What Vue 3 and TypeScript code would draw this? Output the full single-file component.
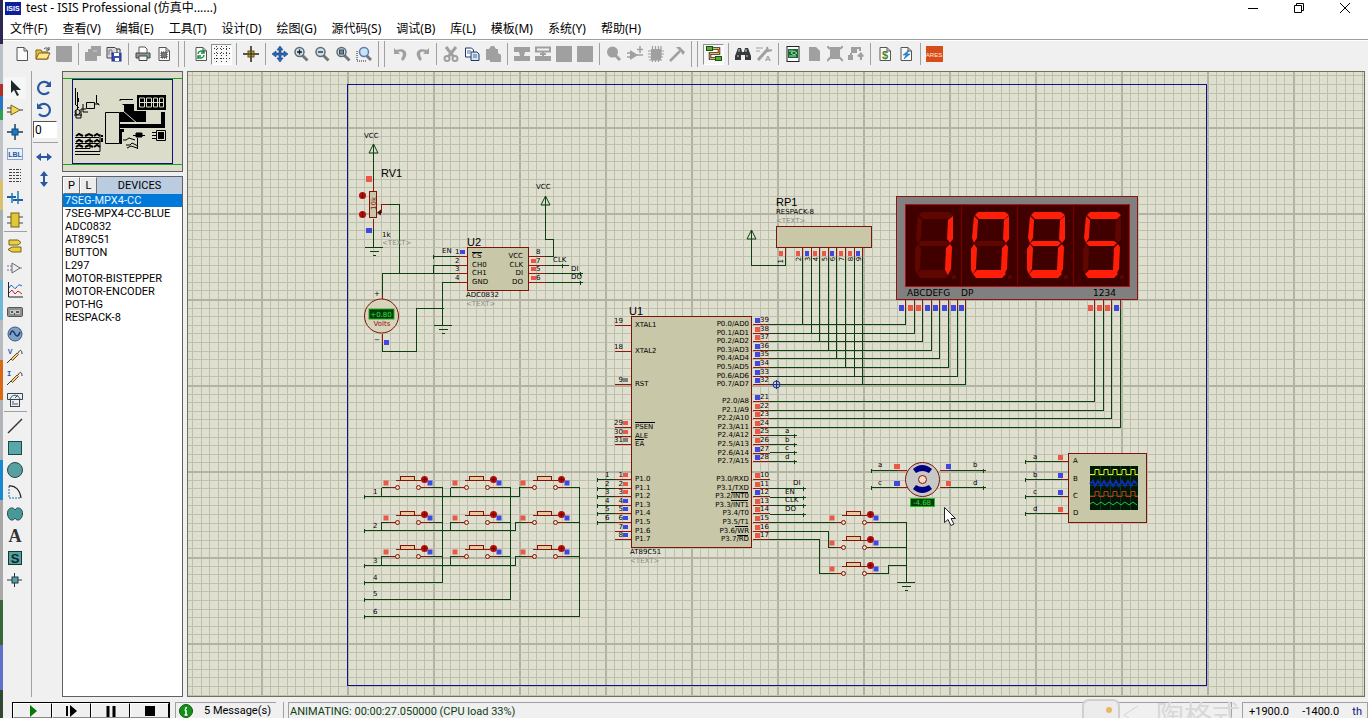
<script setup lang="ts">
interface Tool {
  name: string
  art: string
  on?: boolean
}

const menus = ['文件(F)', '查看(V)', '编辑(E)', '工具(T)', '设计(D)', '绘图(G)', '源代码(S)', '调试(B)', '库(L)', '模板(M)', '系统(Y)', '帮助(H)']

const glyph = (t: string, x: number, y: number, size: number, fill: string, family = 'Liberation Sans, sans-serif') =>
  `<text x="${x}" y="${y}" text-anchor="middle" font-family="${family}" font-weight="bold" font-size="${size}" fill="${fill}">${t}</text>`
const page = '<path d="M3 1.500h7l3.500 3.500v9.500H3z" fill="#fafafa" stroke="#555"/><path d="M10 1.500v3.500h3.500" fill="none" stroke="#555"/>'
const lens = (inner: string, fill = '#cfe0e8') =>
  `<path d="M9 9l5.500 5.500" stroke="#777" stroke-width="3"/><circle cx="6.500" cy="6" r="4.500" fill="${fill}" stroke="#5c6c74" stroke-width="1.500"/>${inner}`
const probe = '<path d="M0 15l4-4M11 5c2-4 4-3 4 1" stroke="#333" fill="none"/><path d="M4 11l6-6 1.500 1.500-6 6z" fill="#f0d080" stroke="#775020"/>'
const g = '#a0a0a0'

const groups: { wide?: boolean; tools: Tool[] }[] = [
  {
    tools: [
      { name: '新建', art: page },
      { name: '打开', art: '<path d="M1 13V4h5l1 2h6v7z" fill="#e8c040" stroke="#806010"/><path d="M1 13l3-6h11l-3 6z" fill="#ffe890" stroke="#806010"/><path d="M9 3c2-2 4-1 5 1m0-3v3h-3" fill="none" stroke="#345"/>' },
      { name: '保存', art: `<path d="M0 0h16v16H1l-1-1z" fill="${g}"/>` },
    ],
  },
  {
    tools: [
      { name: '导入', art: `<path d="M6 0h10v10h-4v5H0V6h3V3h3z" fill="${g}"/><path d="M8 5h4" stroke="#d0d0d0"/>` },
      { name: '导出', art: '<path d="M1 1.500h8l2 2V12H1z" fill="#ddd" stroke="#444"/><path d="M3 9V4h3v5" fill="none" stroke="#777"/><rect x="6" y="7" width="9" height="8" fill="#3850b0" stroke="#203080"/><path d="M8 7h5v3H8zM9 12h4v3H9z" fill="#fff"/><path d="M10 3h4v3" fill="none" stroke="#234"/>' },
    ],
  },
  {
    wide: true,
    tools: [
      { name: '打印', art: '<path d="M4 7V1h6l2 2v4" fill="#fff" stroke="#555"/><path d="M1 7h14v5H1z" fill="#8a9492" stroke="#444"/><path d="M4 10h8v4.500H4z" fill="#f4f4f4" stroke="#444"/><path d="M12 8h2" stroke="#4c4"/>' },
      { name: '打印区域', art: page + '<rect x="5" y="6" width="6" height="6" fill="#777" stroke="#333" stroke-dasharray="1 1"/>' },
    ],
  },
  {
    tools: [
      { name: '刷新', art: page + '<path d="M5 8c0-3 4-4 6-2m0-2v3H8M11 9c0 3-4 4-6 2m0 2v-3h3" fill="none" stroke="#109040" stroke-width="1.400"/>' },
      { name: '网格', on: true, art: '<path d="M0 2.500h16M0 7.500h16M0 12.500h16" stroke="#333" stroke-dasharray="1 2"/><path d="M2.500 0v16M7.500 0v16M12.500 0v16" stroke="#333" stroke-dasharray="1 2"/>' },
    ],
  },
  { tools: [{ name: '原点', art: '<path d="M8 0v16M0 8h16" stroke="#222" stroke-width="1.500"/><rect x="5" y="5" width="6" height="6" fill="#b8a030" stroke="#665510"/><path d="M8 5v6M5 8h6" stroke="#222"/>' }] },
  {
    wide: true,
    tools: [
      { name: '平移', art: '<path d="M8 0l3 4H9v3h3V5l4 3-4 3V9H9v3h2l-3 4-3-4h2V9H4v2L0 8l4-3v2h3V4H5z" fill="#2868b8" stroke="#103878" stroke-width=".6"/>' },
      { name: '放大', art: lens('<path d="M4 6h5M6.500 3.500v5" stroke="#123" stroke-width="1.300"/>') },
      { name: '缩小', art: lens('<path d="M4 6h5" stroke="#123" stroke-width="1.300"/>') },
      { name: '缩放到全部', art: lens('<rect x="4.500" y="4" width="4" height="4" fill="#789" stroke="#345"/>') },
      { name: '缩放到区域', art: '<path d="M1 5v10h10" fill="none" stroke="#222" stroke-dasharray="1 1"/><path d="M10 9l5 5" stroke="#777" stroke-width="3"/><circle cx="8" cy="6" r="4.500" fill="#c8e4f8" stroke="#5880a8" stroke-width="1.500"/>' },
    ],
  },
  {
    tools: [
      { name: '撤销', art: `<path d="M1 2v6h6L5 6c4-2 7 1 3 7l2 2c7-8 2-14-7-11z" fill="${g}"/>` },
      { name: '重做', art: `<path d="M15 2v6H9l2-2C7 4 4 7 8 13l-2 2C-1 7 4 1 13 4z" fill="${g}"/>` },
    ],
  },
  {
    tools: [
      { name: '剪切', art: `<path d="M3 1l8 10M13 1L5 11" stroke="${g}" stroke-width="3"/><circle cx="4" cy="12.500" r="2.500" fill="none" stroke="${g}" stroke-width="2"/><circle cx="12" cy="12.500" r="2.500" fill="none" stroke="${g}" stroke-width="2"/>` },
      { name: '复制', art: '<path d="M1.500 2h6l2 2v7h-8z" fill="#fff" stroke="#203868"/><path d="M7 6h6l2 2v6.500H7z" fill="#d8e4f4" stroke="#203868"/><path d="M3 5h4M3 7h3M9 9h4M9 11h4" stroke="#4870a8"/>' },
      { name: '粘贴', art: `<path d="M1 3h3l2-3h3l2 3h2v4l3 2v7H5v-2H1z" fill="${g}"/>` },
    ],
  },
  {
    tools: [
      { name: '块复制', art: `<path d="M0 1h16v5h-5l-1 4h6v5H0v-5h6L5 6H0z" fill="${g}"/>` },
      { name: '块移动', art: `<path d="M1 1.500h14v4H1zM8 5v5M5 8h6" fill="none" stroke="${g}" stroke-width="2"/><path d="M0 10h16v5H0z" fill="${g}"/>` },
      { name: '块旋转', art: `<path d="M0 0h16v16H0z" fill="${g}"/>` },
      { name: '块删除', art: `<path d="M0 0h16v16H0z" fill="${g}"/>` },
    ],
  },
  {
    wide: true,
    tools: [
      { name: '拾取元件', art: `<circle cx="6.500" cy="6" r="5.500" fill="${g}"/><path d="M9 9l5 5" stroke="${g}" stroke-width="3"/>` },
      { name: '制作元件', art: `<path d="M3 4l8 5-8 5z" fill="${g}"/><path d="M0 7h4M0 11h4M10 9h6M10 3.500h6M13 0v7" stroke="${g}" stroke-width="1.500"/>` },
      { name: '封装工具', art: `<path d="M3 3h10v11H3z" fill="${g}"/><path d="M4.500 0v16M7.500 0v16M10.500 0v16M13 0v12M0 5h16M0 8h16M0 11h15M1 14h13" stroke="${g}" stroke-width="1.200"/>` },
      { name: '分解', art: `<path d="M1 15L11 5" stroke="${g}" stroke-width="2.500"/><path d="M7 1h4l5 5-2 3-2-3z" fill="${g}"/>` },
    ],
  },
  { tools: [{ name: '自动连线', on: true, art: '<path d="M6 2.500h7v5H4v5h5" fill="none" stroke="#222" stroke-width="2.500"/><path d="M6 2.500h7v5H4v5h5" fill="none" stroke="#f8b040"/><rect x=".5" y=".5" width="6" height="4" fill="#58b030" stroke="#205010"/><rect x="9.500" y="10.500" width="6" height="4" fill="#58b030" stroke="#205010"/>' }] },
  {
    tools: [
      { name: '查找', art: '<path d="M3 2h3l1 4h2l1-4h3l3 8v4h-6V9H6v5H0v-4z" fill="#353a3c"/><path d="M2 10h2M11 10h2M4 3v3M11 3v3" stroke="#ccc"/>' },
      { name: '属性分配', art: `<path d="M0 2h7M0 5h4" stroke="${g}"/><path d="M2 14L12 3" stroke="${g}" stroke-width="3"/><path d="M11 1l1 4 4-1" fill="none" stroke="${g}" stroke-width="2"/>` + glyph('A', 12, 15, 8, g) },
    ],
  },
  {
    tools: [
      { name: '设计浏览器', art: '<rect x="2" y="0.500" width="12" height="15" fill="#fff" stroke="#222"/><rect x="3" y="3" width="10" height="9" fill="#186838"/><path d="M4 5h4M4 10h7M6 7l3-2 3 2-3 2z" stroke="#9fe0a0" fill="none"/>' },
      { name: '新建页', art: `<path d="M3 1h7l4 4v10H3z" fill="${g}"/>` },
      { name: '删除页', art: `<path d="M3 1h10v12H3z" fill="${g}"/><path d="M0 0l3 3M16 0l-3 3M0 15l4-4M16 15l-4-4" stroke="${g}" stroke-width="2"/>` },
      { name: '返回上级', art: `<path d="M5 2h7v3M3 7v7M13 7v7" stroke="${g}" stroke-width="2" fill="none"/><path d="M3 1h6v6H3zM0 9h5v5H0zM9 10l4-4 3 4-3 2z" fill="${g}"/>` },
    ],
  },
  {
    tools: [
      { name: '材料清单', art: page + glyph('$', 8, 13, 11, '#508018') },
      { name: '电气检查', art: page + '<path d="M11 4L5 9h3l-2 4 6-5H9z" fill="#2090e0" stroke="#1060a0" stroke-width=".5"/>' },
    ],
  },
]

const modeTools: Tool[][] = [
  [
    { name: '选择', on: true, art: '<path d="M4 0v13l3-3 3 6 2-1-3-5h5z" fill="#1c2a2c"/>' },
    { name: '元件', art: '<path d="M4 3l9 5-9 5z" fill="#f0d858" stroke="#776820"/><path d="M0 6h4M0 10h4M13 8h3" stroke="#333"/>' },
    { name: '节点', art: '<path d="M8 0v16M0 8h16" stroke="#203858" stroke-width="1.500"/><rect x="5" y="5" width="6" height="6" fill="#1878c8" stroke="#104878"/>' },
    { name: '标签', art: '<rect x=".5" y="2.500" width="15" height="11" fill="#e8f0fa" stroke="#2858a0" stroke-dasharray="1 1"/>' + glyph('LBL', 8, 11, 7, '#2858a0') },
    { name: '文本脚本', art: '<path d="M2 1.500h12M2 4.500h12M2 7.500h12M2 10.500h12M2 13.500h12" stroke="#444" stroke-dasharray="3 1 2 1"/>' },
    { name: '总线', art: '<path d="M0 7h9M6 10h10" stroke="#2060a0" stroke-width="2"/><path d="M5 3v10M11 1v13" stroke="#1878b8" stroke-width="1.500"/>' },
    { name: '子电路', art: '<path d="M0 5h16M0 11h16" stroke="#444"/><rect x="4" y="1" width="8" height="14" fill="#e0c838" stroke="#776010"/>' },
  ],
  [
    { name: '终端', art: '<path d="M2 2h9l3 2.500L11 7H2z" fill="#e8d040" stroke="#776010"/><path d="M14 9H5l-4 2.500L5 14h9z" fill="#e8d040" stroke="#776010"/>' },
    { name: '引脚', art: '<path d="M5 3l8 5-8 5z" fill="#eee" stroke="#667"/><path d="M0 6h5M0 10h5M13 8h3" stroke="#778" stroke-dasharray="2 1"/>' },
    { name: '图表', art: '<path d="M1.500 0v15H16" stroke="#222" fill="none"/><path d="M2 6c3-7 5 3 7 0s3-4 6-2" stroke="#1060c0" fill="none"/><path d="M2 11l3-3 3 4 3-3 4 3" stroke="#c02020" fill="none"/>' },
    { name: '磁带机', art: '<rect x="0.500" y="3.500" width="15" height="9" rx="1" fill="#8c9090" stroke="#555"/><rect x="3" y="6" width="10" height="4" fill="#c8caca"/><path d="M4 8h2M9 8h3M7 10h1" stroke="#333" stroke-width="1.500"/>' },
    { name: '信号源', art: '<circle cx="8" cy="8" r="7" fill="#7fa0c8" stroke="#405878"/><path d="M3 9c2-7 4-3 5-1s3 4 5-2" fill="none" stroke="#103868" stroke-width="1.500"/>' },
    { name: '电压探针', art: glyph('V', 3, 6, 7, '#1858b0') + probe },
    { name: '电流探针', art: glyph('I', 2, 6, 7, '#1858b0', 'Liberation Mono, monospace') + probe },
    { name: '虚拟仪器', art: '<path d="M.5 1.500h15v6H.5z" fill="#e8f0f0" stroke="#345"/><path d="M3 7c2-5 8-5 10 0M8 6l3-3" stroke="#456" fill="none"/><rect x="3.500" y="7.500" width="9" height="7" fill="#eee" stroke="#345"/><path d="M5 10h2M5 12h6" stroke="#456"/>' },
  ],
  [
    { name: '直线', art: '<path d="M1 15L15 1" stroke="#333" stroke-width="1.500"/>' },
    { name: '方框', art: '<rect x="1.500" y="1.500" width="13" height="13" fill="#58a8a8" stroke="#204848"/>' },
    { name: '圆', art: '<circle cx="8" cy="8" r="7.500" fill="#58a0a0" stroke="#204848"/>' },
    { name: '圆弧', art: '<path d="M2 2v12h12" fill="none" stroke="#2868a8" stroke-dasharray="2 1"/><path d="M2 2c6-1 11 4 12 12" fill="none" stroke="#222" stroke-width="1.300"/>' },
    { name: '闭合路径', art: '<path d="M8 4c-2-4-8-2-7.500 4S6 16 8 12c2 4 7 2 7.500-4S10 0 8 4z" fill="#489898" stroke="#204848"/>' },
    { name: '文字', art: glyph('A', 8, 14, 18, '#333', 'Liberation Serif, serif') },
    { name: '符号', art: '<rect x="1.500" y="1.500" width="13" height="13" fill="#58a0a0" stroke="#123838"/>' + glyph('S', 8, 13, 13, '#082828') },
    { name: '标记', art: '<path d="M7.500 1v14M0 8h15" stroke="#234"/><rect x="5" y="5" width="6" height="6" fill="#58a0a0" stroke="#234"/>' },
  ],
]

const turnRight = '<path d="M13 12A6.200 6.200 0 1 1 13 4" fill="none" stroke="#2858a0" stroke-width="2.200"/><path d="M15 1v6H9z" fill="#2858a0"/>'
const turnLeft = '<path d="M3 12A6.200 6.200 0 1 0 3 4" fill="none" stroke="#2858a0" stroke-width="2.200"/><path d="M1 1v6h6z" fill="#2858a0"/>'
const flipH = '<path d="M0 8l5-4v3h6V4l5 4-5 4V9H5v3z" fill="#2858a0"/>'
const flipV = '<path d="M8 0l4 5H9v6h3l-4 5-4-5h3V5H4z" fill="#2858a0"/>'

const devices = ['7SEG-MPX4-CC', '7SEG-MPX4-CC-BLUE', 'ADC0832', 'AT89C51', 'BUTTON', 'L297', 'MOTOR-BISTEPPER', 'MOTOR-ENCODER', 'POT-HG', 'RESPACK-8']

const playback = [
  { name: '运行', art: '<path d="M5 2l7 6-7 6z" fill="#087808"/>' },
  { name: '单步', art: '<path d="M3 3v10" stroke="#000" stroke-width="2"/><path d="M6 2l7 6-7 6z"/>' },
  { name: '暂停', art: '<path d="M5 3v11M11 3v11" stroke="#000" stroke-width="3"/>' },
  { name: '停止', art: '<path d="M3 3h10v10H3z"/>' },
]

// Schematic sheet: one major grid line every ten minor ones
const PITCH = 8.6
const ORIGIN_X = 347
const ORIGIN_Y = 127
const gridX = Array.from({ length: 300 }, (_, i) => i - 18).map(i => ({ p: Math.round(ORIGIN_X + i * PITCH), major: i % 10 === 0 }))
const gridY = Array.from({ length: 160 }, (_, i) => i - 6).map(i => ({ p: Math.round(ORIGIN_Y + i * PITCH), major: i % 10 === 0 }))

interface Pin { y: number; n: number; label: string; c: string }
const pinY = (base: number, i: number) => Math.round(base + i * PITCH)
const port = (base: number, labels: string[], first: number, step: number, colors: string): Pin[] =>
  labels.map((label, i) => ({ y: pinY(base, i), n: first + i * step, label, c: colors.charAt(i) }))

const leftPins: Pin[] = [
  { y: 325, n: 19, label: 'XTAL1', c: '' },
  { y: 351, n: 18, label: 'XTAL2', c: '' },
  { y: 384, n: 9, label: 'RST', c: 'g' },
  { y: 427, n: 29, label: 'PSEN', c: 'r' },
  { y: 436, n: 30, label: 'ALE', c: 'r' },
  { y: 444, n: 31, label: 'EA', c: 'g' },
  ...port(479, ['P1.0', 'P1.1', 'P1.2', 'P1.3', 'P1.4', 'P1.5', 'P1.6', 'P1.7'], 1, 1, 'rrrbbbbb'),
]
const rightPins: Pin[] = [
  ...port(324, ['P0.0/AD0', 'P0.1/AD1', 'P0.2/AD2', 'P0.3/AD3', 'P0.4/AD4', 'P0.5/AD5', 'P0.6/AD6', 'P0.7/AD7'], 39, -1, 'brrbbbbb'),
  ...port(401, ['P2.0/A8', 'P2.1/A9', 'P2.2/A10', 'P2.3/A11', 'P2.4/A12', 'P2.5/A13', 'P2.6/A14', 'P2.7/A15'], 21, 1, 'brrrrrbb'),
  ...port(479, ['P3.0/RXD', 'P3.1/TXD', 'P3.2/INT0', 'P3.3/INT1', 'P3.4/T0', 'P3.5/T1', 'P3.6/WR', 'P3.7/RD'], 10, 1, 'rrbrrrrr'),
]

const segPins = [...'brrbbbbb'].map((c, i) => ({ x: Math.round(905 + i * PITCH), c, y: pinY(324, i) }))
const digitPins = [...'rrrb'].map((c, i) => ({ x: Math.round(1094 + i * PITCH), c, y: pinY(401, i) }))
const packPins = [...'rbrrbrrb'].map((c, i) => ({ x: Math.round(802 + i * PITCH), c, n: i + 2, y: pinY(324, i) }))

const netLabels = [
  ...['a', 'b', 'c', 'd'].map((t, i) => ({ t, x: 785, y: pinY(436, i) - 3, to: 794, wy: pinY(435, i) })),
  ...['DI', 'EN', 'CLK', 'DO'].map((t, i) => ({ t, x: i === 0 ? 793 : 785, y: pinY(488, i) - 3, to: 803, wy: pinY(488, i) })),
]
const scopePins = ['a', 'b', 'c', 'd'].map((t, i) => ({ t, y: [461, 479, 496, 513][i], c: 'rbbr'.charAt(i) }))

const buttons = [
  ...[487, 522, 556].flatMap(y => [397, 466, 534].map(x => ({ x, y }))),
  ...[522, 547, 573].map(y => ({ x: 843, y })),
]

const SEG: Record<string, string> = {
  a: 'M31 18l3-3h27l4 3-4 4H35z',
  b: 'M65 19l0 23-3 4-3-4 1-19z',
  c: 'M62 47l2 3-1 22-3 6-3-5 1-22z',
  d: 'M29 77l4-4h26l3 4-4 4H32z',
  e: 'M30 47l3 4-1 21-3 5-2-4 0-21z',
  f: 'M30 19l4 4-1 18-3 5-2-5z',
  g: 'M30 46l3-2h25l3 2-3 3H33z',
}
const digits = ['bc', 'abcdef', 'abcdefg', 'acdfg'].map((lit, i) => ({
  x: 888 + i * 56,
  segs: Object.entries(SEG)
    .map(([k, d]) => ({ d, on: lit.includes(k) }))
    .sort((p, q) => Number(p.on) - Number(q.on)),
}))

const wires = [
  'M373 153V180M373 228V247M387 204H399V273M382 298V273H455M433 273V265H455M433 256H455M455 282H442V325M382 343V351H416V308H443',
  'M545 205V239H553V256H545M545 265H568M545 273H580M545 282H580',
  'M785 256V265H751V239',
  'M769 522H835M769 531H828V547H835M769 539H819V573H835M872 522H906V582M872 547H906M872 573H888V565H906',
  'M364 496H519V487H527M381 487V496M381 487H390M450 487V496M450 487H459M364 530H515V522H527M381 530V522H390M450 530V522H459M364 565H515V556H527M381 565V556H390M450 565V556H459',
  'M427 487H442V582H364M427 522H442M427 556H442M496 487H510V599H364M496 522H510M496 556H510M564 487H579V616H364M564 522H579M564 556H579',
  'M871 470H897M871 487H897M948 470H983M948 487H983',
].join('')
const grounds = [[373, 247], [442, 325], [905, 582]]
const arrows = [[373, 144], [545, 196], [751, 230]]
const ticks = [
  [433, 256], [562, 265], [580, 273], [580, 282], [871, 470], [871, 487], [983, 470], [983, 487],
  [364, 496], [364, 530], [364, 565], [364, 582], [364, 599], [364, 616],
  [1025, 461], [1025, 479], [1025, 496], [1025, 513],
  ...netLabels.map(n => [n.to, n.wy]),
  ...[0, 1, 2, 3, 4, 5].map(i => [597, pinY(479, i)]),
]
const keyLabels = [[1, 494], [2, 528], [3, 563], [4, 580], [5, 596], [6, 614]]
const sq = (c: string) => ({ r: 'sq-red', b: 'sq-blue', g: 'sq-grey' })[c] ?? ''
</script>

<template>
  <div class="desktop">
    <div class="window">
      <header class="titlebar">
        <svg class="logo" width="16" height="13" viewBox="0 0 16 13" aria-hidden="true">
          <path d="M0 0h16v13H0z" fill="#0a1f9c" />
          <text x="8" y="9" text-anchor="middle">ISIS</text>
        </svg>
        <h1>test - ISIS Professional (仿真中......)</h1>
        <button class="win" aria-label="最小化"><svg width="12" height="12"><path d="M1 6.500h10" stroke="#000" /></svg></button>
        <button class="win" aria-label="还原"><svg width="12" height="12"><path d="M1.500 3.500h7v7h-7zM3.500 3.500v-2h7v7h-2" fill="none" stroke="#000" /></svg></button>
        <button class="win" aria-label="关闭"><svg width="12" height="12"><path d="M1 1l10 10M11 1L1 11" stroke="#000" /></svg></button>
      </header>

      <nav class="menubar">
        <button v-for="m in menus" :key="m">{{ m }}</button>
      </nav>

      <div class="toolbar">
        <div v-for="(group, gi) in groups" :key="gi" class="group" :class="{ wide: group.wide }">
          <button v-for="t in group.tools" :key="t.name" :class="{ on: t.on }" :aria-label="t.name">
            <svg width="16" height="16" viewBox="0 0 16 16" v-html="t.art" />
          </button>
        </div>
        <button class="ares" aria-label="ARES">
          <svg width="17" height="16" viewBox="0 0 17 16">
            <path d="M0 0h17v16H0z" fill="#d84c18" />
            <text x="8" y="11" text-anchor="middle">ARES</text>
          </svg>
        </button>
      </div>

      <main class="work">
        <aside class="modes">
          <div v-for="(set, si) in modeTools" :key="si" class="set">
            <button v-for="t in set" :key="t.name" :class="{ picked: t.on }" :aria-label="t.name">
              <svg width="16" height="16" viewBox="0 0 16 16" v-html="t.art" />
            </button>
          </div>
        </aside>
        <aside class="orient">
          <button aria-label="顺时针旋转"><svg width="16" height="16" v-html="turnRight" /></button>
          <button aria-label="逆时针旋转"><svg width="16" height="16" v-html="turnLeft" /></button>
          <input aria-label="角度" value="0" />
          <hr />
          <button aria-label="水平镜像"><svg width="16" height="16" v-html="flipH" /></button>
          <button aria-label="垂直镜像"><svg width="16" height="16" v-html="flipV" /></button>
        </aside>

        <aside class="side">
          <svg class="overview" viewBox="62 71 121 101" preserveAspectRatio="xMidYMid meet" aria-label="预览">
            <path d="M62 78.500h121M62 164.500h121" stroke="#20a020" />
            <rect x="72.500" y="79.500" width="100" height="84" fill="none" stroke="#10107c" />
            <g fill="none" stroke="#000">
              <path d="M75.500 88v16M77.500 92v18M75 104l4 4M74 115h8M76 110v8h5v-9h5M78.500 98v4M86.500 102.500h8v6h-8zM94 104h5M96.500 95v8l3 2M83 104v8h5" />
              <circle cx="77.500" cy="112" r="2.500" />
              <path d="M105.500 112.500h14v31h-14z" />
              <path d="M120 101v-1.500h13M122.500 104.500h9" />
              <path d="M75 137.500h24M75 143.500h24M75 148.500h15V137M75 151.500h25V134M75 154.500h25" />
              <path d="M76 136l3-2 4 2M85 136l4-2 4 2M94 136l3-2 3 2M76 142l3-2 4 2M85 142l4-2 4 2M94 142l3-2 3 2M76 147l3-2 4 2M85 147l4-2 4 2M94 147l3-2 3 2" stroke-width="2" />
              <path d="M102 135v2M102 138v4M121 132v12" stroke-width="2" />
              <path d="M123 140h3l3-2 6 2M126 145h4l2-2 6 3M137.500 138v11M133 135.500h12M127 148l4-2 6 2" />
              <path d="M136 133h6v4h-6z" fill="#000" />
              <path d="M152 132.500h4M152 135.500h4M152 138.500h4" />
              <path d="M156.500 130.500h9v10h-9z" />
            </g>
            <path d="M137 95h29v15h-29zM124 104h10v7h12v11h-10l-12-10zM120 112h6l10 10h-16zM120 124h41v-12h4v16h-45zM158 132h6v7h-6zM120 129h4v3h-4z" />
            <path d="M139.500 98h5v9h-5zM146.500 98h5v9h-5zM153.500 98h4v9h-4zM159.500 98h4v9h-4zM139 102.500h25" fill="none" stroke="#dcdccb" />
            <path d="M123 111l14 12" stroke="#dcdccb" />
          </svg>
          <section class="picker">
            <div class="picker-head">
              <button>P</button>
              <button>L</button>
              <h2>DEVICES</h2>
            </div>
            <ul>
              <li v-for="(d, i) in devices" :key="d" :class="{ current: i === 0 }">{{ d }}</li>
            </ul>
          </section>
        </aside>

        <svg class="sheet" role="img" aria-label="电路原理图">
          <g transform="translate(-188 -72)">
            <g shape-rendering="crispEdges">
              <path v-for="l in gridX" :key="'x' + l.p" :d="`M${l.p}.5 0V1500`" :class="l.major ? 'major' : 'minor'" />
              <path v-for="l in gridY" :key="'y' + l.p" :d="`M180 ${l.p}.5H3000`" :class="l.major ? 'major' : 'minor'" />
              <rect class="frame" x="347.500" y="84.500" width="859" height="601" />
            </g>

            <g transform="translate(.5 .5)" shape-rendering="crispEdges">
              <path class="wire" :d="wires" />
              <path v-for="p in segPins" :key="p.x" class="wire" :d="`M${p.x} 308V${p.y}H769`" />
              <path v-for="p in digitPins" :key="p.x" class="wire" :d="`M${p.x} 308V${p.y}H769`" />
              <path v-for="p in packPins" :key="p.x" class="wire" :d="`M${p.x} 256V${p.y}`" />
              <path v-for="n in netLabels" :key="n.wy" class="wire" :d="`M769 ${n.wy}H${n.to}`" />
              <path v-for="p in scopePins" :key="p.y" class="wire" :d="`M1025 ${p.y}H1060`" />
              <path v-for="i in 6" :key="i" class="wire" :d="`M597 ${pinY(479, i - 1)}H614`" />
              <path v-for="([x, y], i) in grounds" :key="'g' + i" class="wire" :d="`M${x - 9} ${y}h18M${x - 4} ${y + 4}h9M${x - 1} ${y + 8}h3`" />
              <path v-for="([x, y], i) in ticks" :key="'t' + i" class="wire" :d="`M${x - 1} ${y}h3M${x} ${y - 2}v4`" />

              <path class="pin" d="M373 180V191M373 218V228M382 293V299M382 333V343M387 204H381V212M455 256H467M455 265H467M455 273H467M455 282H467M528 256H545M528 265H545M528 273H545M528 282H545M785 247V256M897 470H906M897 487H906M939 470H948M939 487H948" />
              <path v-for="p in segPins" :key="'r' + p.x" class="pin" :d="`M${p.x} 299v9`" />
              <path v-for="p in digitPins" :key="'r' + p.x" class="pin" :d="`M${p.x} 299v9`" />
              <path v-for="p in packPins" :key="'r' + p.x" class="pin" :d="`M${p.x} 247v9`" />
              <path v-for="p in scopePins" :key="'r' + p.y" class="pin" :d="`M1060 ${p.y}h8`" />
              <path v-for="p in leftPins" :key="'r' + p.n" class="pin" :d="`M614 ${p.y}h17`" />
              <path v-for="p in rightPins" :key="'r' + p.n" class="pin" :d="`M752 ${p.y}h17`" />

              <rect class="body" x="369" y="191" width="7" height="26" />
              <rect class="body" x="467" y="247" width="61" height="43" />
              <rect class="body" x="631" y="316" width="120" height="231" />
              <rect class="body" x="776" y="226" width="95" height="21" />
              <rect class="body" x="1068" y="453" width="78" height="69" />
              <rect class="bezel" x="896" y="196" width="241" height="103" />
              <rect class="glass" x="905" y="204" width="224" height="82" />
              <path d="M961 204v82M1017 204v82M1073 204v82" stroke="#780000" />
            </g>

            <path v-for="([x, y], i) in arrows" :key="'a' + i" class="wire" :d="`M${x}.500 ${y}l4.500 9h-9zv14`" />

            <!-- seven segment read-out -->
            <g v-for="(d, i) in digits" :key="'d' + i" :transform="`translate(${d.x} 197)`">
              <path v-for="(s, j) in d.segs" :key="j" :d="s.d" :fill="s.on ? '#ff1e08' : '#600600'" />
              <circle cx="66" cy="80" r="2" fill="#600600" />
            </g>
            <g class="pixel wide-text">
              <text x="907" y="296">ABCDEFG</text>
              <text x="961" y="296">DP</text>
              <text x="1093" y="296">1234</text>
            </g>

            <!-- logic state markers -->
            <g shape-rendering="crispEdges">
              <rect v-for="p in segPins" :key="p.x" :class="sq(p.c)" :x="p.x - 6" y="305" width="5" height="6" />
              <rect v-for="p in digitPins" :key="p.x" :class="sq(p.c)" :x="p.x - 6" y="305" width="5" height="6" />
              <rect v-for="p in packPins" :key="p.x" :class="sq(p.c)" :x="p.x - 6" y="251" width="4" height="5" />
              <rect class="sq-red" x="779" y="251" width="4" height="5" />
              <template v-for="p in leftPins" :key="p.n">
                <rect v-if="p.c" :class="sq(p.c)" x="623" :y="p.y - 6" width="5" height="4" />
              </template>
              <rect v-for="p in rightPins" :key="p.n" :class="sq(p.c)" x="755" :y="p.y - 6" width="5" height="5" />
              <rect v-for="p in scopePins" :key="p.y" :class="sq(p.c)" x="1058" :y="p.y - 6" width="5" height="5" />
              <rect class="sq-red" x="366" y="176" width="6" height="6" />
              <rect class="sq-blue" x="366" y="228" width="6" height="5" />
              <rect class="sq-blue" x="384" y="340" width="5" height="5" />
              <rect class="sq-blue" x="460" y="250" width="5" height="4" />
              <rect class="sq-red" x="531" y="259" width="5" height="4" />
              <rect class="sq-red" x="531" y="267" width="5" height="4" />
              <rect class="sq-red" x="531" y="276" width="5" height="4" />
              <rect class="sq-red" x="894" y="464" width="6" height="5" />
              <rect class="sq-blue" x="894" y="481" width="6" height="5" />
              <rect class="sq-blue" x="946" y="464" width="5" height="5" />
              <rect class="sq-red" x="946" y="481" width="5" height="5" />
            </g>

            <!-- push buttons -->
            <g v-for="(b, i) in buttons" :key="'b' + i" :transform="`translate(${b.x}.5 ${b.y}.5)`">
              <path class="pin" d="M-9 0h7M23 0h8M-2-7h25" shape-rendering="crispEdges" />
              <rect x="3" y="-11" width="14" height="4" fill="#e8c8a0" stroke="#7c1408" shape-rendering="crispEdges" />
              <circle r="2" fill="#f0dcc0" stroke="#7c1408" />
              <circle cx="21" r="2" fill="#f0dcc0" stroke="#7c1408" />
              <circle cx="27" cy="-8" r="3.500" fill="#b80c08" />
              <path d="M27-10v4M25-8h4" stroke="#600" />
              <rect class="sq-red" x="-14" y="-7" width="5" height="5" />
              <rect class="sq-blue" x="30" y="-7" width="5" height="5" />
            </g>

            <!-- potentiometer adjusters and wiper -->
            <g fill="#b80c08">
              <circle cx="362.500" cy="195.500" r="3.500" />
              <circle cx="362.500" cy="214.500" r="3.500" />
            </g>
            <path d="M362.500 193v5M362.500 212v5" stroke="#500" />
            <path d="M377 212.500l4-3v6z" fill="#401010" />

            <!-- voltmeter -->
            <circle cx="381.500" cy="316" r="17" fill="#d8d4bc" stroke="#7c1408" />
            <rect x="369" y="309" width="25" height="10" fill="#063c08" stroke="#20a828" />
            <text class="pixel led" x="381" y="317" text-anchor="middle">+0.80</text>
            <text class="pixel maroon" x="382" y="326" text-anchor="middle">Volts</text>

            <!-- stepper motor -->
            <circle cx="922.500" cy="479.500" r="17" fill="#c8c8c4" stroke="#7c1408" />
            <path d="M913 469q9-8 19 0l-3 4q-7-4-13 0zM913 489q9 8 19 0l-3-4q-7 4-13 0z" fill="#000080" />
            <circle cx="922.500" cy="479.500" r="4" fill="#f8d8c8" stroke="#7c1408" />
            <rect x="910.500" y="498.500" width="24" height="8" fill="#063c08" stroke="#20c028" />
            <text class="pixel led" x="922" y="505" text-anchor="middle">-4.68</text>

            <!-- oscilloscope screen -->
            <rect x="1090" y="466" width="48" height="44" fill="#001808" />
            <path d="M1090 475.500h48M1090 485.500h48M1090 495.500h48M1100.500 466v44M1110.500 466v44M1120.500 466v44M1130.500 466v44" stroke="#084018" />
            <path d="M1090 474.500h5v-5h4v5h5v-5h4v5h5v-5h4v5h5v-5h4v5h5v-5h4v5h3" fill="none" stroke="#e8f020" />
            <path d="M1090 484l3-3 2 5 3-5 3 5 3-5 3 5 3-5 3 5 3-5 3 5 3-5 3 5 3-5 3 5 3-5 3 3" fill="none" stroke="#102cb0" stroke-width="2" />
            <path d="M1090 496.500h5v-5h4v5h5v-5h4v5h5v-5h4v5h5v-5h4v5h5v-5h4v5h3" fill="none" stroke="#d83010" />
            <path d="M1090 504l3-2 4 3 4-3 4 3 4-3 4 3 4-3 4 3 4-3 4 3 4-3 4 3" fill="none" stroke="#30c048" />

            <circle cx="776.500" cy="384.500" r="3.500" fill="none" stroke="#183090" />
            <path d="M772 384.500h9M776.500 380v9" stroke="#183090" />

            <g class="ref">
              <text x="381" y="177">RV1</text>
              <text x="467" y="246">U2</text>
              <text x="629" y="315">U1</text>
              <text x="776" y="206">RP1</text>
            </g>

            <g class="pixel">
              <text x="364" y="138">VCC</text>
              <text x="536" y="189">VCC</text>
              <text x="382" y="237">1k</text>
              <text class="maroon" transform="translate(376 210) rotate(-90)">10k</text>
              <text x="374" y="296">+</text>
              <text x="374" y="342">−</text>
              <text x="442" y="253">EN</text>
              <text x="553" y="262">CLK</text>
              <text x="571" y="271">DI</text>
              <text x="571" y="279">DO</text>
              <text x="455" y="254">1</text><text x="455" y="263">2</text><text x="455" y="271">3</text><text x="455" y="280">4</text>
              <text x="536" y="254">8</text><text x="536" y="263">7</text><text x="536" y="271">5</text><text x="536" y="280">6</text>
              <text x="472" y="258">CS</text><text x="472" y="267">CH0</text><text x="472" y="275">CH1</text><text x="472" y="284">GND</text>
              <text x="466" y="297">ADC0832</text>
              <text x="776" y="214">RESPACK-8</text>
              <text x="630" y="554">AT89C51</text>
              <g text-anchor="end">
                <text x="523" y="258">VCC</text><text x="523" y="267">CLK</text><text x="523" y="275">DI</text><text x="523" y="284">DO</text>
                <text v-for="p in leftPins" :key="p.n" x="623" :y="p.y - 2">{{ p.n }}</text>
                <text v-for="p in rightPins" :key="p.n" x="749" :y="p.y + 2">{{ p.label }}</text>
              </g>
              <text v-for="p in leftPins" :key="p.n" x="635" :y="p.y + 2">{{ p.label }}</text>
              <text v-for="p in rightPins" :key="p.n" x="760" :y="p.y - 2">{{ p.n }}</text>
              <text v-for="i in 6" :key="i" x="605" :y="pinY(479, i - 1) - 2">{{ i }}</text>
              <text v-for="n in netLabels" :key="n.wy" :x="n.x" :y="n.y">{{ n.t }}</text>
              <text transform="translate(783 259) rotate(-90)" text-anchor="end">1</text>
              <text v-for="p in packPins" :key="p.n" :transform="`translate(${p.x - 1} 259) rotate(-90)`" text-anchor="middle">{{ p.n }}</text>
              <text v-for="([n, y]) in keyLabels" :key="n" x="373" :y="y">{{ n }}</text>
              <text x="878" y="467">a</text><text x="878" y="485">c</text><text x="973" y="467">b</text><text x="973" y="485">d</text>
              <template v-for="(p, i) in scopePins" :key="p.t">
                <text x="1033" :y="p.y - 2">{{ p.t }}</text>
                <text x="1073" :y="p.y + 2">{{ 'ABCD'.charAt(i) }}</text>
              </template>
              <g class="faint">
                <text x="382" y="245">&lt;TEXT&gt;</text>
                <text x="466" y="306">&lt;TEXT&gt;</text>
                <text x="776" y="223">&lt;TEXT&gt;</text>
                <text x="630" y="563">&lt;TEXT&gt;</text>
              </g>
            </g>
            <path d="M472 252.500h10M635 422.500h20M635 439.500h9M731 492.500h17M731 500.500h17M735 526.500h13M737 535.500h11" stroke="#000" />

            <path d="M944.500 507.500v15l3.500-3 3 6 3-1.500-3-5.500h4.500z" fill="#fff" stroke="#222" />
          </g>
        </svg>
      </main>

      <footer class="status">
        <div class="transport">
          <button v-for="p in playback" :key="p.name" :aria-label="p.name"><svg width="16" height="16" v-html="p.art" /></button>
        </div>
        <button class="messages">
          <svg width="14" height="14"><circle cx="7" cy="7" r="6.500" fill="#149018" stroke="#0a5c10" /><path d="M7 6v5M5.500 6H7M5.500 11h3M7 3v2" stroke="#fff" stroke-width="1.500" /></svg>
          <span>5 Message(s)</span>
        </button>
        <output class="anim">ANIMATING: 00:00:27.050000 (CPU load 33%)</output>
        <output class="coords"><span>+1900.0</span><span>-1400.0</span><span class="unit">th</span></output>
        <div class="watermark" aria-hidden="true">
          <svg width="76" height="20"><rect x="3" y="2" width="36" height="30" rx="6" fill="#ececec" stroke="#cfcfcf" stroke-width="2" /><circle cx="29" cy="12" r="3" fill="#e8b860" /><path d="M58 8l-14 9 14 9" fill="none" stroke="#d4d4d4" /></svg>
          <span>陶格式</span>
        </div>
      </footer>
    </div>
  </div>
</template>

<style>
body {
  margin: 0;
  overflow: hidden;
}
</style>

<style scoped>
* {
  box-sizing: border-box;
}
.desktop {
  height: 100vh;
  padding-left: 3px;
  background: linear-gradient(#2c2850 0 44px, #b8c0c8 44px 84px, #b03028 84px 96px, #2878c0 96px 110px, #30a050 110px 120px, #c0c4c8 120px 180px, #d8c070 180px 210px, #a8b0b0 210px 280px, #70b8d8 280px 320px, #b8bcc0 320px 360px, #d86818 360px 400px, #b0b4b8 400px 460px, #1888d0 460px 500px, #a8a8a8 500px 600px, #386838 600px 645px, #6070c8 645px 690px, #304830 690px);
  font-family: Roboto, "Noto Sans CJK SC", sans-serif;
  font-size: 11px;
  color: #000;
}
.window {
  height: 100%;
  display: flex;
  flex-direction: column;
  background: #f0f0f0;
}
button {
  border: 0;
  padding: 0;
  background: none;
  font: inherit;
  color: inherit;
  display: flex;
  align-items: center;
  justify-content: center;
}
svg {
  flex: none;
  display: block;
}
.titlebar {
  height: 16px;
  padding-left: 2px;
  display: flex;
  align-items: center;
  background: #fff;
}
.logo text {
  font: bold 7px "Liberation Sans", sans-serif;
  fill: #fff;
}
.ares text {
  font: 6px "Liberation Sans", sans-serif;
  fill: #fff0e0;
}
h1 {
  flex: 1;
  margin: 0 0 0 5px;
  font: 12px/16px "Noto Sans", "Noto Sans CJK SC", sans-serif;
}
.win {
  width: 46px;
  height: 14px;
}
.menubar {
  height: 24px;
  padding-top: 2px;
  display: flex;
  align-items: center;
  gap: 1px;
  background: #fff;
  border-bottom: 1px solid #98a098;
  font: 12px/16px "Noto Sans", "Noto Sans CJK SC", sans-serif;
}
.menubar button {
  padding: 0 7px;
  white-space: nowrap;
}
.toolbar {
  height: 31px;
  padding-left: 8px;
  display: flex;
  align-items: center;
  border-top: 1px solid #fff;
  padding-bottom: 4px;
}
.group {
  display: flex;
  align-items: center;
  height: 22px;
  margin-right: 3px;
  padding-right: 4px;
  border-right: 1px solid #a0a0a0;
}
.group.wide {
  height: 26px;
  margin-right: 5px;
  padding-right: 10px;
  border-right: 1px solid #a0a0a0;
  background: linear-gradient(#a0a0a0, #a0a0a0) right 5px top / 1px 100% no-repeat;
}
.group button,
.ares {
  width: 21px;
  height: 21px;
}
.group .on {
  background: #f8f8f8;
  border: 1px solid;
  border-color: #909090 #fff #fff #909090;
}
.work {
  flex: 1;
  min-height: 0;
  display: flex;
}
.modes {
  width: 29px;
  padding: 6px 4px 0 1px;
  border-right: 1px solid #a0a0a0;
}
.modes .picked {
  background: #f6f6f6;
}
.set + .set {
  border-top: 1px solid #a0a0a0;
  padding-top: 3px;
}
.modes button {
  width: 22px;
  height: 22px;
}
.modes svg {
  overflow: visible;
}
.orient {
  width: 30px;
  padding: 6px 4px 0 1px;
}
.orient button {
  width: 22px;
  height: 22px;
}
.orient input {
  display: block;
  width: 24px;
  height: 17px;
  padding: 0 1px;
  border: 1px solid;
  border-color: #555 #fff #fff #555;
  background: #fff;
  font: 12px Roboto, sans-serif;
}
.orient hr {
  margin: 4px 0 3px;
  border: 0;
  border-top: 1px solid #a0a0a0;
}
.side {
  width: 121px;
  margin-right: 4px;
  display: flex;
  flex-direction: column;
  gap: 4px;
}
.overview {
  height: 101px;
  width: 100%;
  background: #dcdccb;
  outline: 1px solid #606060;
  outline-offset: -1px;
}
.picker {
  flex: 1;
  border: 1px solid #606060;
  background: #fff;
}
.picker-head {
  height: 17px;
  display: flex;
  background: #bccce0;
}
.picker-head button {
  width: 17px;
  background: #ececec;
  border: 1px solid;
  border-color: #fff #707070 #707070 #fff;
}
.picker-head h2 {
  flex: 1;
  margin: 0;
  text-align: center;
  font: 11px/17px Roboto, sans-serif;
}
ul {
  margin: 0;
  padding: 0;
  list-style: none;
}
li {
  padding-left: 2px;
  line-height: 13px;
}
.current {
  background: #0078d7;
  color: #e8f4ff;
}
.sheet {
  flex: 1;
  min-width: 0;
  height: 100%;
  margin-right: 3px;
  border: 1px solid #70705f;
  background: #dfdfd0;
}
.minor {
  stroke: #bfbfae;
}
.major {
  stroke: #b2b2a2;
  stroke-width: 2px;
}
.frame {
  fill: none;
  stroke: #10108c;
}
.wire {
  fill: none;
  stroke: #0c4010;
}
.pin {
  fill: none;
  stroke: #901808;
}
.body {
  fill: #c8c7a8;
  stroke: #7c1408;
}
.bezel {
  fill: #808080;
  stroke: #8c1410;
}
.glass {
  fill: #400000;
  stroke: #b01010;
}
.sq-red {
  fill: #ec5848;
}
.sq-blue {
  fill: #4048e0;
}
.sq-grey {
  fill: #808078;
}
.pixel {
  font: 7px "DejaVu Sans", sans-serif;
  fill: #000;
}
.wide-text {
  font-size: 9px;
}
.led {
  fill: #30e040;
}
.maroon {
  fill: #8c1008;
}
.faint {
  fill: #8c8c80;
}
.ref {
  font: 11px "Liberation Sans", sans-serif;
}
.status {
  position: relative;
  height: 21px;
  padding: 5px 0 0 9px;
  display: flex;
  align-items: stretch;
  overflow: hidden;
}
.transport {
  display: flex;
  border: 1px solid #000;
  border-bottom: 0;
}
.transport button {
  width: 39px;
  border: 1px solid;
  border-color: #fff #888 #888 #fff;
  border-right: 1px solid #000;
}
.messages {
  margin-left: 5px;
  padding-left: 3px;
  gap: 11px;
  border-left: 1px solid #a0a0a0;
  border-top: 1px solid #a0a0a0;
  white-space: nowrap;
  padding-right: 5px;
}
.anim {
  flex: 1;
  margin-left: 12px;
  padding: 1px;
  border: 1px solid #a0a0a0;
  border-bottom: 0;
  color: #0c4010;
  line-height: 16px;
  box-shadow: -4px 0 #f0f0f0, -5px 0 #a0a0a0;
}
.coords {
  z-index: 1;
  margin-left: 10px;
  width: 126px;
  padding: 1px 5px 0 6px;
  border: 1px solid #a0a0a0;
  border-bottom: 0;
  display: flex;
  justify-content: space-between;
  line-height: 16px;
}
.unit {
  color: #101080;
}
.watermark {
  position: absolute;
  right: 128px;
  top: 1px;
  display: flex;
  color: #d8d8d8;
  font: 28px/32px "Noto Sans CJK SC", sans-serif;
}
</style>
